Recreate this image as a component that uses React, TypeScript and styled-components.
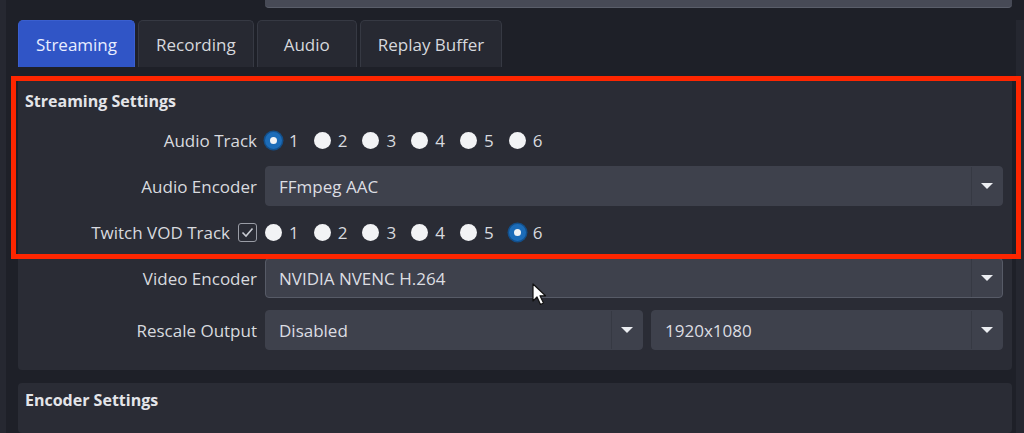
import styled, { createGlobalStyle } from 'styled-components';

const GlobalStyle = createGlobalStyle`
  html, body {
    margin: 0;
    padding: 0;
    background: #1e2028;
  }
  body {
    font-family: "Open Sans", "Noto Sans", sans-serif;
  }
`

const Page = styled.div`
  position: relative;
  display: flex;
  box-sizing: border-box;
  width: 1024px;
  height: 433px;
  overflow: hidden;
  background: #1e2028;
  border-left: 6px solid #262831;
  padding-left: 12px;
`

const Column = styled.div`
  display: flex;
  flex-direction: column;
  flex: 1;
`

const ScrollTrack = styled.div`
  width: 8px;
  margin: 20px 0 0 4px;
  background: #252730;
`

const TopField = styled.div`
  height: 7px;
  margin-left: 247px;
  background: #474a56;
  border-bottom: 1px solid #5a5e6a;
  border-radius: 0 0 4px 4px;
`

const TabBar = styled.div`
  display: flex;
  gap: 3px;
  margin-top: 12px;
`

const Tab = styled.div<{ $active?: boolean }>`
  display: flex;
  align-items: center;
  justify-content: center;
  box-sizing: border-box;
  height: 47px;
  min-width: 100px;
  padding: 0 17px;
  border: 1px solid ${p => p.$active ? '#3a5fcf' : '#363943'};
  border-bottom: none;
  border-radius: 5px 5px 0 0;
  background: ${p => p.$active ? '#3055c6' : '#272932'};
  color: ${p => p.$active ? '#e8edff' : '#d6d8dd'};
  font-size: 17px;
`

const Body = styled.div`
  display: flex;
  flex-direction: column;
  gap: 13px;
  flex: 1;
  padding-top: 11px;
`

const Group = styled.div<{ $fill?: boolean }>`
  background: #2a2c35;
  border-radius: 4px;
  padding: ${p => p.$fill ? '6px 9px 0 7px' : '12px 9px 20px 7px'};
  flex: ${p => p.$fill ? 1 : 'none'};
`

const GroupTitle = styled.div`
  font-weight: 700;
  font-size: 16px;
  line-height: 22px;
  color: #e4e5e9;
  margin-bottom: 14px;
`

const Form = styled.div`
  display: grid;
  grid-template-columns: 232px 1fr;
  column-gap: 8px;
  row-gap: 12px;
  align-items: center;
`

const Label = styled.div`
  justify-self: end;
  display: flex;
  align-items: center;
  gap: 8px;
  color: #d8dadf;
  font-size: 17px;
`

const RadioRow = styled.div`
  display: flex;
  align-items: center;
  height: 28px;
`

const RadioItem = styled.div`
  display: flex;
  align-items: center;
  gap: 7px;
  margin-right: 15px;
  color: #d8dadf;
  font-size: 17px;
`

const Radio = styled.span<{ $checked?: boolean }>`
  box-sizing: border-box;
  width: 17px;
  height: 17px;
  border-radius: 50%;
  background: #f2f3f5;
  border: ${p => p.$checked ? '5px solid #1c6cb8' : 'none'};
  box-shadow: ${p => p.$checked ? '0 0 0 1.5px #134f8a' : 'none'};
`

const Checkbox = styled.span`
  display: flex;
  align-items: center;
  justify-content: center;
  box-sizing: border-box;
  width: 19px;
  height: 19px;
  border: 1.5px solid #9a9da6;
  border-radius: 3px;
`

const Combo = styled.div<{ $hover?: boolean }>`
  display: flex;
  align-items: center;
  box-sizing: border-box;
  height: 40px;
  border-radius: 4px;
  background: #3e414c;
  border: 1px solid ${p => p.$hover ? '#575b67' : '#3e414c'};
`

const ComboText = styled.div`
  flex: 1;
  padding-left: 13px;
  color: #dcdde2;
  font-size: 17px;
`

const ComboArrow = styled.div`
  display: flex;
  align-items: center;
  justify-content: center;
  align-self: stretch;
  width: 30px;
  border-left: 1px solid #363943;

  &::after {
    content: '';
    border-left: 6px solid transparent;
    border-right: 6px solid transparent;
    border-top: 6px solid #eceef2;
  }
`

const ComboPair = styled.div`
  display: grid;
  grid-template-columns: 378px 1fr;
  gap: 8px;
`

// annotation drawn over the screenshot
const Highlight = styled.div`
  position: absolute;
  left: 5px;
  top: 76px;
  width: 1010px;
  height: 183px;
  box-sizing: border-box;
  border: 5px solid #fe2600;
  pointer-events: none;
`

const Cursor = styled.svg`
  position: absolute;
  left: 526px;
  top: 283px;
`

const tracks = [1, 2, 3, 4, 5, 6];

function TrackRadios({ selected }: { selected: number }) {
  return (
    <RadioRow>
      {tracks.map(t => (
        <RadioItem key={t}>
          <Radio $checked={t === selected} />
          {t}
        </RadioItem>
      ))}
    </RadioRow>
  )
}

function Select({ value, hover }: { value: string; hover?: boolean }) {
  return (
    <Combo $hover={hover}>
      <ComboText>{value}</ComboText>
      <ComboArrow />
    </Combo>
  )
}

export default function App() {
  return (
    <Page>
      <GlobalStyle />
      <Column>
        <TopField />
        <TabBar>
          <Tab $active>Streaming</Tab>
          <Tab>Recording</Tab>
          <Tab>Audio</Tab>
          <Tab>Replay Buffer</Tab>
        </TabBar>
        <Body>
          <Group>
            <GroupTitle>Streaming Settings</GroupTitle>
            <Form>
              <Label>Audio Track</Label>
              <TrackRadios selected={1} />

              <Label>Audio Encoder</Label>
              <Select value="FFmpeg AAC" />

              <Label>
                Twitch VOD Track
                <Checkbox>
                  <svg width="13" height="11" viewBox="0 0 13 11">
                    <path d="M1.5 5.5 L5 9 L11.5 1.5" fill="none" stroke="#c9ccd3" strokeWidth="1.6" />
                  </svg>
                </Checkbox>
              </Label>
              <TrackRadios selected={6} />

              <Label>Video Encoder</Label>
              <Select value="NVIDIA NVENC H.264" hover />

              <Label>Rescale Output</Label>
              <ComboPair>
                <Select value="Disabled" />
                <Select value="1920x1080" />
              </ComboPair>
            </Form>
          </Group>
          <Group $fill>
            <GroupTitle>Encoder Settings</GroupTitle>
          </Group>
        </Body>
      </Column>
      <ScrollTrack />
      <Highlight />
      <Cursor width="16" height="24" viewBox="0 0 16 24">
        <path d="M1 1 L1 18 L5 14 L8.5 21.5 L11.5 20 L8 12.8 L13.5 12.8 Z" fill="#ffffff" stroke="#111" strokeWidth="1.2" strokeLinejoin="round" />
      </Cursor>
    </Page>
  )
}
